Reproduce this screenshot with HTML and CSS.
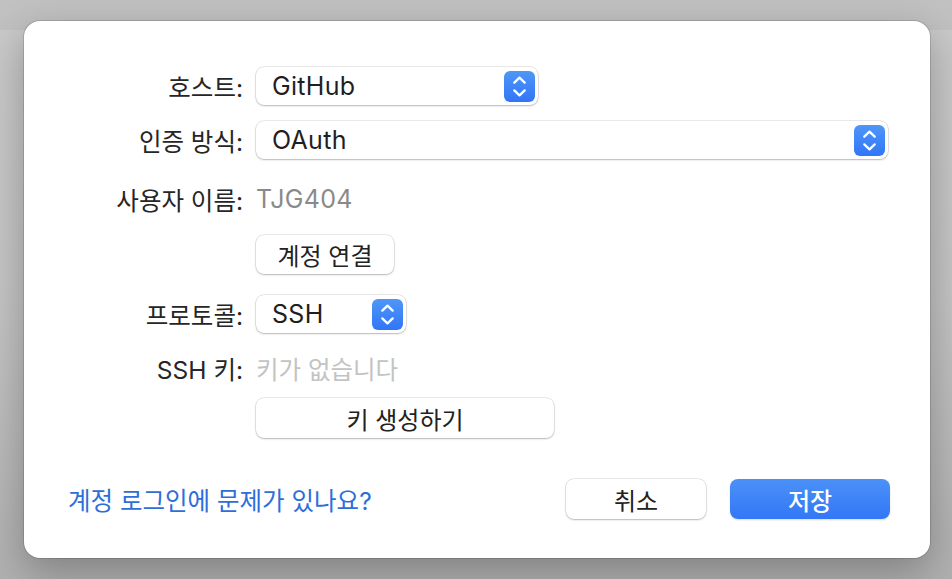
FILE: index.html
```html
<!DOCTYPE html>
<html lang="ko">
<head>
<meta charset="utf-8">
<title>계정 설정</title>
<link rel="stylesheet" href="styles.css">
</head>
<body>
<div class="dialog">
  <div class="row row-host">
    <div class="label">호스트:</div>
    <div class="select select-host">
      <span class="value">GitHub</span>
      <span class="stepper"><svg width="31" height="31" viewBox="0 0 31 31"><path d="M10.3 11.6 L15.5 6.6 L20.7 11.6 M10.3 19.4 L15.5 24.4 L20.7 19.4" fill="none" stroke="#fff" stroke-width="2.3" stroke-linecap="round" stroke-linejoin="round"/></svg></span>
    </div>
  </div>
  <div class="row row-auth">
    <div class="label">인증 방식:</div>
    <div class="select select-auth">
      <span class="value">OAuth</span>
      <span class="stepper"><svg width="31" height="31" viewBox="0 0 31 31"><path d="M10.3 11.6 L15.5 6.6 L20.7 11.6 M10.3 19.4 L15.5 24.4 L20.7 19.4" fill="none" stroke="#fff" stroke-width="2.3" stroke-linecap="round" stroke-linejoin="round"/></svg></span>
    </div>
  </div>
  <div class="row row-user">
    <div class="label">사용자 이름:</div>
    <div class="text-value latin">TJG404</div>
  </div>
  <div class="row row-connect">
    <div class="label"></div>
    <div class="button btn-connect">계정 연결</div>
  </div>
  <div class="row row-proto">
    <div class="label">프로토콜:</div>
    <div class="select select-proto">
      <span class="value">SSH</span>
      <span class="stepper"><svg width="31" height="31" viewBox="0 0 31 31"><path d="M10.3 11.6 L15.5 6.6 L20.7 11.6 M10.3 19.4 L15.5 24.4 L20.7 19.4" fill="none" stroke="#fff" stroke-width="2.3" stroke-linecap="round" stroke-linejoin="round"/></svg></span>
    </div>
  </div>
  <div class="row row-key">
    <div class="label">SSH 키:</div>
    <div class="text-value placeholder">키가 없습니다</div>
  </div>
  <div class="row row-gen">
    <div class="label"></div>
    <div class="button btn-gen">키 생성하기</div>
  </div>
  <div class="footer">
    <a class="link">계정 로그인에 문제가 있나요?</a>
    <div class="actions">
      <div class="button btn-cancel">취소</div>
      <div class="button btn-save">저장</div>
    </div>
  </div>
</div>
</body>
</html>
```
FILE: styles.css
```css
html, body {
  margin: 0;
  padding: 0;
}
body {
  width: 952px;
  height: 579px;
  overflow: hidden;
  background: linear-gradient(to bottom, #c2c1c1 0, #c2c1c1 30px, #c9c9c9 30px, #c4c4c4 300px, #b0b0b0 579px);
  font-family: Inter, "Noto Sans CJK KR", sans-serif;
  color: #262626;
  font-size: 24.5px;
}
.dialog {
  margin: 21px 0 0 24px;
  width: 906px;
  height: 537px;
  box-sizing: border-box;
  padding: 46px 42px 39px 0;
  background: #fff;
  border-radius: 16px;
  box-shadow: 0 0 0 1px rgba(0,0,0,0.13), 0 14px 40px rgba(0,0,0,0.28);
  display: flex;
  flex-direction: column;
}
.row {
  display: flex;
  align-items: center;
  flex: none;
}
.label {
  width: 219px;
  margin-right: 13px;
  text-align: right;
  flex: none;
  color: #262626;
  white-space: nowrap;
}
.row-host { height: 38px; }
.row-auth { height: 38px; margin-top: 16px; }
.row-user { height: 30px; margin-top: 25px; }
.row-connect { height: 39px; margin-top: 21px; }
.row-proto { height: 38px; margin-top: 21px; }
.row-key { height: 30px; margin-top: 20px; }
.row-gen { height: 40px; margin-top: 15px; }

.select {
  height: 100%;
  box-sizing: border-box;
  display: flex;
  align-items: center;
  justify-content: space-between;
  padding: 0 3px 0 16px;
  background: #fff;
  border-radius: 8px;
  box-shadow: 0 0 0 0.5px rgba(0,0,0,0.16), 0 1px 2px rgba(0,0,0,0.22);
  color: #1f1f1f;
}
.select-host { width: 282px; }
.select-auth { flex: 1; }
.select-proto { width: 150px; }
.value {
  line-height: 1;
  font-size: 25px;
  letter-spacing: 0.3px;
}
.stepper {
  width: 31px;
  height: 31px;
  border-radius: 6px;
  background: linear-gradient(to bottom, #4f96f8, #3176f5);
  display: flex;
  align-items: center;
  justify-content: center;
}
.stepper svg { display: block; }

.text-value {
  color: #8a8a8a;
}
.text-value.latin {
  font-size: 25px;
  letter-spacing: 0.3px;
}
.text-value.placeholder {
  color: #c3c3c3;
}

.button {
  height: 100%;
  box-sizing: border-box;
  display: flex;
  align-items: center;
  justify-content: center;
  background: #fff;
  border-radius: 8px;
  box-shadow: 0 0 0 0.5px rgba(0,0,0,0.16), 0 1px 2px rgba(0,0,0,0.22);
  color: #222;
  font-size: 24px;
}
.btn-connect { width: 138px; }
.btn-gen { width: 298px; }

.footer {
  margin-top: 41px;
  height: 40px;
  display: flex;
  align-items: center;
  justify-content: space-between;
  padding-left: 44px;
  flex: none;
}
.link {
  color: #2d6ed9;
  font-size: 24.5px;
  cursor: pointer;
}
.actions {
  display: flex;
  height: 40px;
  gap: 24px;
  margin-right: -2px;
}
.btn-cancel { width: 140px; }
.btn-save {
  width: 160px;
  background: linear-gradient(to bottom, #4b91f8, #3377f6);
  box-shadow: 0 1px 2px rgba(0,0,0,0.15);
  color: #fff;
  font-weight: 500;
}
```
